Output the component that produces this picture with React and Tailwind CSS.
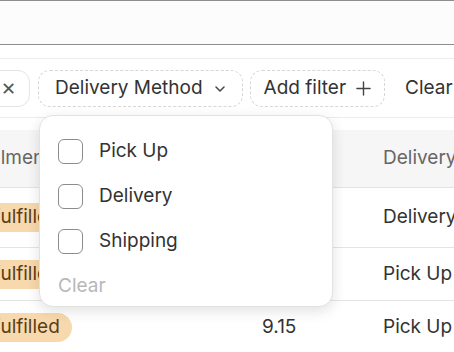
import React from "react";

const rows = [
  { h: "h-[60px]", amount: "", method: "Delivery" },
  { h: "h-[53px]", amount: "", method: "Pick Up" },
  { h: "h-[54px]", amount: "9.15", method: "Pick Up" },
];

const options = ["Pick Up", "Delivery", "Shipping"];

export default function App() {
  return (
    <div
      className="relative w-[454px] h-[352px] overflow-hidden bg-white text-[#333]"
      style={{ fontFamily: "Inter, 'Noto Sans', sans-serif" }}
    >
      {/* top bar */}
      <div className="h-[45px] bg-[#fcfcfc] border-t border-b border-[#8e8e8e]" />
      <div className="h-[14px] border-b border-[#ececec]" />

      {/* filters */}
      <div className="flex items-center h-[59px] pt-[1px] border-b border-[#ececec] whitespace-nowrap text-[19px]">
        <div className="shrink-0 flex items-center h-[37px] ml-[-60px] pl-[20px] pr-[13px] rounded-[12px] border border-[#e4e4e4]">
          <span className="w-[40px]" />
          <span className="text-[#555] text-[18px]">✕</span>
        </div>
        <div className="shrink-0 flex items-center h-[37px] ml-[8px] pl-[16px] pr-[16px] rounded-[12px] border border-dashed border-[#d6d6d6]">
          Delivery Method
          <svg className="ml-[11px]" width="12" height="12" viewBox="0 0 12 12" fill="none">
            <path d="M2 4l4 4 4-4" stroke="#444" strokeWidth="1.5" strokeLinecap="round" strokeLinejoin="round" />
          </svg>
        </div>
        <div className="shrink-0 flex items-center h-[37px] ml-[7px] pl-[13px] pr-[13px] rounded-[12px] border border-dashed border-[#d6d6d6]">
          Add filter
          <svg className="ml-[10px]" width="15" height="15" viewBox="0 0 16 16" fill="none">
            <path d="M8 1v14M1 8h14" stroke="#444" strokeWidth="1.5" strokeLinecap="round" />
          </svg>
        </div>
        <span className="shrink-0 ml-[20px]">Clear</span>
      </div>

      {/* table */}
      <div className="mt-[12px] whitespace-nowrap text-[19px]">
        <div className="flex items-center h-[58px] bg-[#f6f6f6] border-b border-[#e4e4e4] text-[#666]">
          <span className="shrink-0 ml-[-42px] w-[304px]">Fulfillment</span>
          <span className="shrink-0 w-[121px]" />
          <span className="shrink-0">Delivery</span>
        </div>
        {rows.map((r, i) => (
          <div key={i} className={`flex items-center ${r.h} border-b border-[#e4e4e4]`}>
            <div className="shrink-0 ml-[-44px] w-[306px] flex">
              <span className="px-[12px] h-[29px] flex items-center rounded-full bg-[#f8d9ad] text-[#5a3e17]">
                Unfulfilled
              </span>
            </div>
            <span className="shrink-0 w-[121px]">{r.amount}</span>
            <span className="shrink-0">{r.method}</span>
          </div>
        ))}
      </div>

      {/* dropdown */}
      <div className="absolute left-[39px] top-[115px] w-[294px] h-[192px] pt-[13px] bg-white rounded-[14px] border border-[#e2e2e2] shadow-[0_4px_14px_rgba(0,0,0,0.12)] text-[19px]">
        {options.map((o) => (
          <div key={o} className="flex items-center h-[45px] pl-[18px]">
            <span className="w-[25px] h-[25px] rounded-[6px] border border-[#8c8c8c]" />
            <span className="ml-[16px]">{o}</span>
          </div>
        ))}
        <div className="flex items-center h-[45px] pl-[18px] text-[#b8b8b8]">Clear</div>
      </div>
    </div>
  );
}
